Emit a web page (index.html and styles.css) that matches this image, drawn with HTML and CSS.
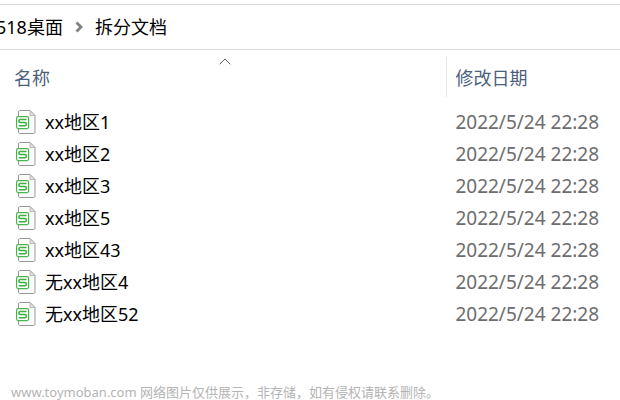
FILE: index.html
```
<!doctype html>
<html lang="zh-CN">
    <head>
        <meta charset="utf-8">
        <title>拆分文档</title>
        <link rel="stylesheet" href="styles.css">
    </head>
    <body>
        <svg class="symbols" width="0" height="0" aria-hidden="true">
            <symbol id="sheet" viewBox="0 0 20 24">
                <path d="M3.5 .5h10.500l5 5V22a1.500 1.500 0 0 1-1.500 1.500h-14A1.500 1.500 0 0 1 2.500 22V2a1.500 1.500 0 0 1 1-1.500z" fill="#fcfcfc" stroke="#999"/>
                <path d="M14 .5v5h5z" fill="#ddd" stroke="#aaa" stroke-width=".7"/>
                <rect x=".6" y="6.600" width="12" height="12" rx="1.500" fill="#fff" stroke="#4ab54a" stroke-width="1.200"/>
                <path d="M10.500 9.500H4.200q-1.200 0-1.200 1.200v.7q0 1.200 1.200 1.200H9q1.300 0 1.300 1.200v.7q0 1.200-1.300 1.200H2.700" fill="none" stroke="#3db03d" stroke-width="1.500"/>
            </symbol>
        </svg>
        <nav class="path">
            <a href="#">518桌面</a>
            <svg class="arrow" viewBox="0 0 8 12"><path d="M1.500 1.500L6 6l-4.500 4.500" fill="none" stroke="#808080" stroke-width="2.800"/></svg>
            <a href="#">拆分文档</a>
        </nav>
        <main>
            <table class="files">
                <thead>
                    <tr>
                        <th class="name" aria-sort="ascending">
                            <svg class="sort" viewBox="0 0 12 7"><path d="M.7 6.300L6 1l5.300 5.300" fill="none" stroke="#606060"/></svg>
                            名称
                        </th>
                        <th class="date">修改日期</th>
                    </tr>
                </thead>
                <tbody>
                    <tr><td><div class="file"><svg class="icon"><use href="#sheet"/></svg>xx地区1</div></td><td>2022/5/24 22:28</td></tr>
                    <tr><td><div class="file"><svg class="icon"><use href="#sheet"/></svg>xx地区2</div></td><td>2022/5/24 22:28</td></tr>
                    <tr><td><div class="file"><svg class="icon"><use href="#sheet"/></svg>xx地区3</div></td><td>2022/5/24 22:28</td></tr>
                    <tr><td><div class="file"><svg class="icon"><use href="#sheet"/></svg>xx地区5</div></td><td>2022/5/24 22:28</td></tr>
                    <tr><td><div class="file"><svg class="icon"><use href="#sheet"/></svg>xx地区43</div></td><td>2022/5/24 22:28</td></tr>
                    <tr><td><div class="file"><svg class="icon"><use href="#sheet"/></svg>无xx地区4</div></td><td>2022/5/24 22:28</td></tr>
                    <tr><td><div class="file"><svg class="icon"><use href="#sheet"/></svg>无xx地区52</div></td><td>2022/5/24 22:28</td></tr>
                </tbody>
            </table>
        </main>
        <footer class="note">www.toymoban.com 网络图片仅供展示，非存储，如有侵权请联系删除。</footer>
    </body>
</html>
```
FILE: styles.css
```
* {
    box-sizing: border-box;
}
body {
    background: #fff;
    color: #000;
    display: flex;
    flex-direction: column;
    font-family: "Noto Sans", "Noto Sans CJK SC", sans-serif;
    font-size: 18px;
    line-height: 24px;
    margin: 0;
    min-height: 100vh;
    overflow-x: hidden;
    padding-top: 4px;
}
.symbols {
    position: absolute;
}
/* the start of the path is scrolled out on the left */
.path {
    align-items: center;
    border: solid #d9d9d9;
    border-width: 1px 0;
    display: flex;
    gap: 12px;
    height: 46px;
    margin-left: -4px;
    white-space: nowrap;
}
.path a {
    color: inherit;
    text-decoration: none;
}
.arrow {
    height: 12px;
    width: 8px;
}
.files {
    border-collapse: collapse;
    table-layout: fixed;
    width: 100%;
}
.files th {
    color: #4c607a;
    font-weight: normal;
    height: 56px;
    padding: 0 0 0 14px;
    position: relative;
    text-align: left;
}
.files .name {
    width: 72%;
}
.files .date {
    padding-left: 9px;
}
.date::before {
    background: #e5e5e5;
    content: "";
    height: 40px;
    left: 0;
    position: absolute;
    top: 7px;
    width: 1px;
}
.sort {
    height: 7px;
    left: 49%;
    position: absolute;
    top: 8px;
    width: 12px;
}
.files td {
    color: #6d6d6d;
    font-size: 19px;
    height: 32px;
    padding: 0 0 0 9px;
    white-space: nowrap;
}
.files td:first-child {
    color: #000;
    font-size: 18px;
    padding-left: 16px;
}
.file {
    align-items: center;
    display: flex;
    gap: 9px;
}
.icon {
    height: 24px;
    width: 20px;
}
.note {
    color: #b4b4b4;
    font-size: 13px;
    line-height: 16px;
    margin-top: auto;
    padding: 0 11px;
}
```
